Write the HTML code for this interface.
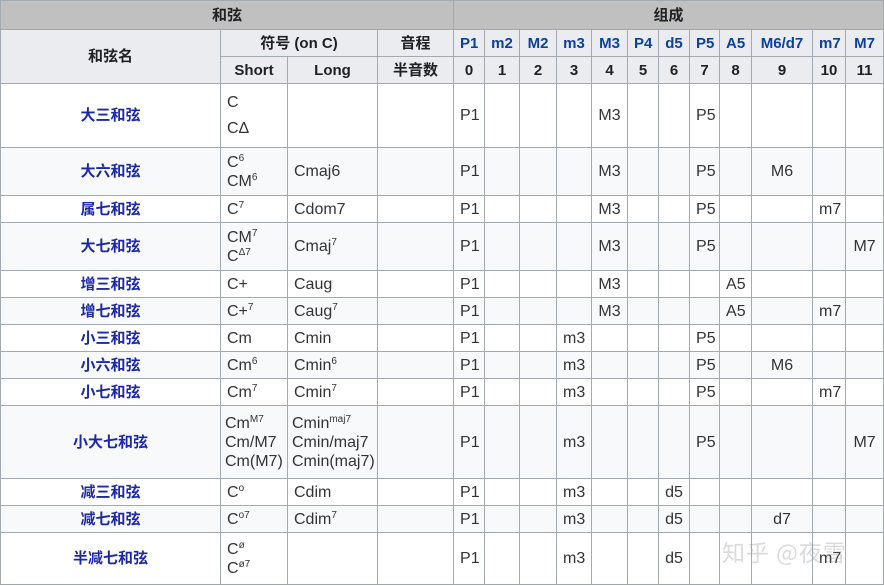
<html><head><style>
body{margin:0;background:#fff;font-family:"Liberation Sans","Noto Sans CJK SC",sans-serif;font-size:13px;color:#333}
table{position:absolute;left:0;top:0;border-collapse:collapse;table-layout:fixed;width:884px}
td,th{border:1px solid #a2a9b1;padding:0 6px;text-align:center;line-height:19px;overflow:hidden;white-space:nowrap}
th{background:#eaecf0;font-weight:bold;font-size:15px;color:#202122}
tr.t th{background:#c0c0c0}
th.b{color:#0b4199}
td.n{font-weight:bold;color:#1b28a8;font-size:15px}
td.l{text-align:left}
tr.a td{background:#f8f9fa}
sup{font-size:10px;line-height:0;vertical-align:6px}
.wm{position:absolute;left:722px;top:534px;font-size:23px;color:rgba(150,150,150,.35);letter-spacing:1px;font-family:"Noto Sans CJK SC",sans-serif}
</style></head><body>
<table>
<colgroup><col style="width:220px"><col style="width:67px"><col style="width:90px"><col style="width:76px"><col style="width:31px"><col style="width:35px"><col style="width:37px"><col style="width:35px"><col style="width:36px"><col style="width:31px"><col style="width:31px"><col style="width:30px"><col style="width:32px"><col style="width:61px"><col style="width:33px"><col style="width:38px"></colgroup>
<tr class="t" style="height:29px"><th colspan="4">和弦</th><th colspan="12">组成</th></tr>
<tr style="height:27px"><th rowspan="2">和弦名</th><th colspan="2">符号 (on C)</th><th>音程</th><th class="b">P1</th><th class="b">m2</th><th class="b">M2</th><th class="b">m3</th><th class="b">M3</th><th class="b">P4</th><th class="b">d5</th><th class="b">P5</th><th class="b">A5</th><th class="b">M6/d7</th><th class="b">m7</th><th class="b">M7</th></tr>
<tr style="height:27px"><th>Short</th><th>Long</th><th>半音数</th><th>0</th><th>1</th><th>2</th><th>3</th><th>4</th><th>5</th><th>6</th><th>7</th><th>8</th><th>9</th><th>10</th><th>11</th></tr>
<tr style="height:64px"><td class="n">大三和弦</td><td class="l" style="line-height:26px">C<br>CΔ</td><td></td><td></td><td>P1</td><td></td><td></td><td></td><td>M3</td><td></td><td></td><td>P5</td><td></td><td></td><td></td><td></td></tr>
<tr class="a" style="height:48px"><td class="n">大六和弦</td><td class="l">C<sup>6</sup><br>CM<sup>6</sup></td><td class="l">Cmaj6</td><td></td><td>P1</td><td></td><td></td><td></td><td>M3</td><td></td><td></td><td>P5</td><td></td><td>M6</td><td></td><td></td></tr>
<tr style="height:27px"><td class="n">属七和弦</td><td class="l">C<sup>7</sup></td><td class="l">Cdom7</td><td></td><td>P1</td><td></td><td></td><td></td><td>M3</td><td></td><td></td><td>P5</td><td></td><td></td><td>m7</td><td></td></tr>
<tr class="a" style="height:48px"><td class="n">大七和弦</td><td class="l">CM<sup>7</sup><br>C<sup>Δ7</sup></td><td class="l">Cmaj<sup>7</sup></td><td></td><td>P1</td><td></td><td></td><td></td><td>M3</td><td></td><td></td><td>P5</td><td></td><td></td><td></td><td>M7</td></tr>
<tr style="height:27px"><td class="n">增三和弦</td><td class="l">C+</td><td class="l">Caug</td><td></td><td>P1</td><td></td><td></td><td></td><td>M3</td><td></td><td></td><td></td><td>A5</td><td></td><td></td><td></td></tr>
<tr class="a" style="height:27px"><td class="n">增七和弦</td><td class="l">C+<sup>7</sup></td><td class="l">Caug<sup>7</sup></td><td></td><td>P1</td><td></td><td></td><td></td><td>M3</td><td></td><td></td><td></td><td>A5</td><td></td><td>m7</td><td></td></tr>
<tr style="height:27px"><td class="n">小三和弦</td><td class="l">Cm</td><td class="l">Cmin</td><td></td><td>P1</td><td></td><td></td><td>m3</td><td></td><td></td><td></td><td>P5</td><td></td><td></td><td></td><td></td></tr>
<tr class="a" style="height:27px"><td class="n">小六和弦</td><td class="l">Cm<sup>6</sup></td><td class="l">Cmin<sup>6</sup></td><td></td><td>P1</td><td></td><td></td><td>m3</td><td></td><td></td><td></td><td>P5</td><td></td><td>M6</td><td></td><td></td></tr>
<tr style="height:27px"><td class="n">小七和弦</td><td class="l">Cm<sup>7</sup></td><td class="l">Cmin<sup>7</sup></td><td></td><td>P1</td><td></td><td></td><td>m3</td><td></td><td></td><td></td><td>P5</td><td></td><td></td><td>m7</td><td></td></tr>
<tr class="a" style="height:73px"><td class="n">小大七和弦</td><td class="l" style="padding:0 4px">Cm<sup>M7</sup><br>Cm/M7<br>Cm(M7)</td><td class="l" style="padding:0 4px">Cmin<sup>maj7</sup><br>Cmin/maj7<br>Cmin(maj7)</td><td></td><td>P1</td><td></td><td></td><td>m3</td><td></td><td></td><td></td><td>P5</td><td></td><td></td><td></td><td>M7</td></tr>
<tr style="height:27px"><td class="n">减三和弦</td><td class="l">C<sup>o</sup></td><td class="l">Cdim</td><td></td><td>P1</td><td></td><td></td><td>m3</td><td></td><td></td><td>d5</td><td></td><td></td><td></td><td></td><td></td></tr>
<tr class="a" style="height:27px"><td class="n">减七和弦</td><td class="l">C<sup>o7</sup></td><td class="l">Cdim<sup>7</sup></td><td></td><td>P1</td><td></td><td></td><td>m3</td><td></td><td></td><td>d5</td><td></td><td></td><td>d7</td><td></td><td></td></tr>
<tr style="height:52px"><td class="n">半减七和弦</td><td class="l">C<sup>ø</sup><br>C<sup>ø7</sup></td><td></td><td></td><td>P1</td><td></td><td></td><td>m3</td><td></td><td></td><td>d5</td><td></td><td></td><td></td><td>m7</td><td></td></tr>
</table>
<div class="wm">知乎 @夜雪</div>
</body></html>
